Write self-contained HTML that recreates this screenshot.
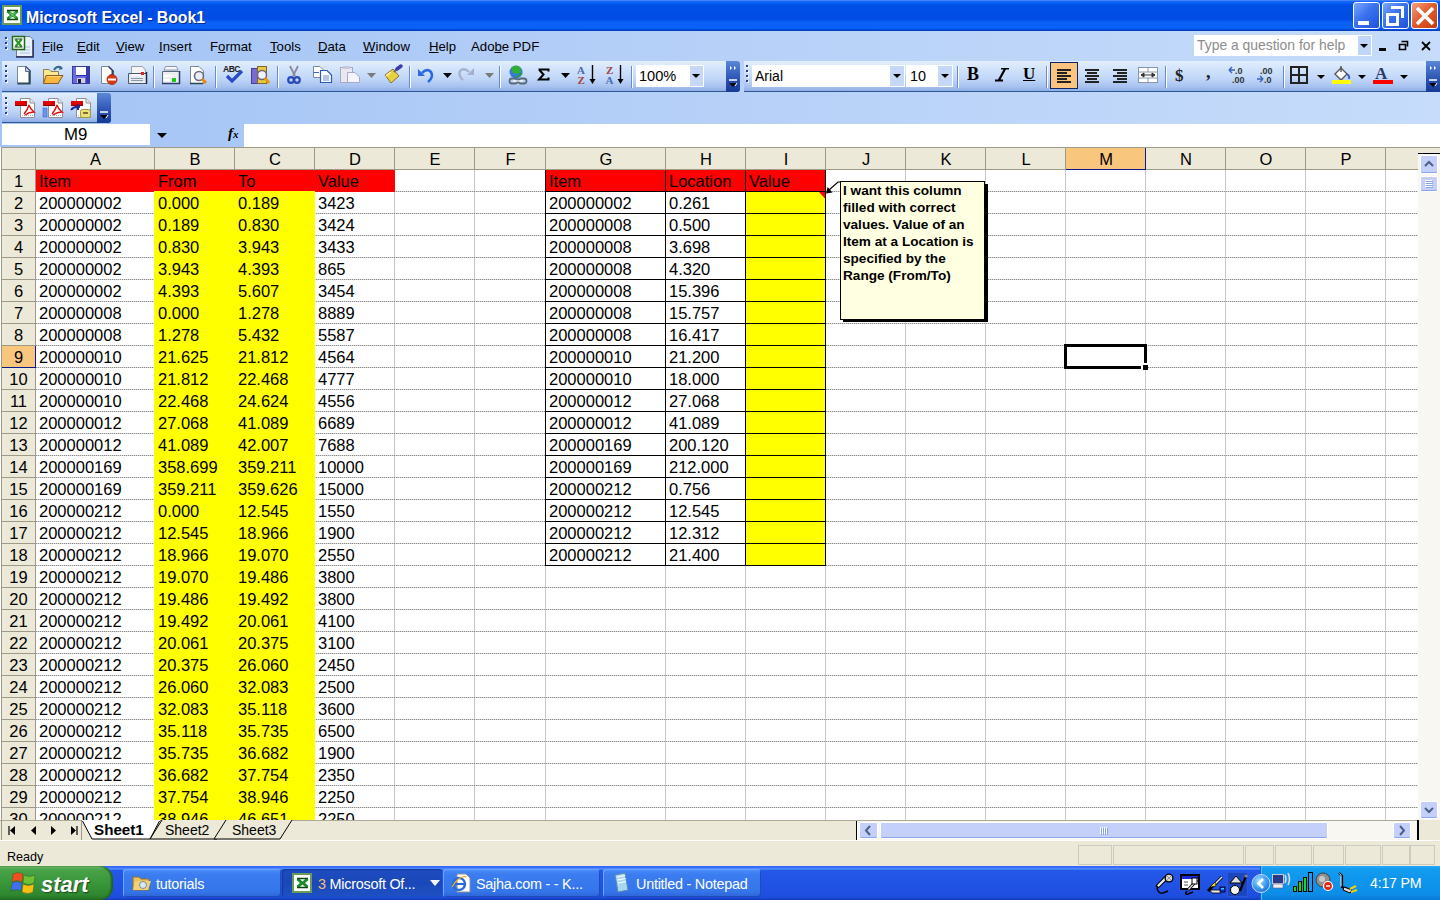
<!DOCTYPE html>
<html><head><meta charset="utf-8"><title>Microsoft Excel - Book1</title>
<style>
*{margin:0;padding:0;box-sizing:border-box}
html,body{width:1440px;height:900px;overflow:hidden;background:#fff;font-family:"Liberation Sans",sans-serif}
div,svg{position:absolute}
.tb{background:linear-gradient(#e2eefe 0%,#d0e2fb 30%,#c0d6f8 60%,#a8c2f0 85%,#8eaee6 100%);border-bottom:1px solid #2e5890;border-radius:0 4px 4px 0}
.menu{top:39px;font-size:13.2px;color:#000}
.sep{width:1px;height:22px;background:#6a8ccf;box-shadow:1px 0 0 #fff}
.dot{width:2px;height:2px;background:#27418f;box-shadow:1px 1px 0 #fff}
.cell{font-size:16.5px;color:#000;white-space:nowrap;line-height:18px}
.chev{background:linear-gradient(#5b87d8,#2a52b0 60%,#163a96)}
.dd{width:0;height:0;border-left:4px solid transparent;border-right:4px solid transparent;border-top:4px solid #000}
.sbtn{background:#c4d0fa;border:1px solid #fff;border-radius:2px;box-shadow:inset 0 -1px 0 #8aa8e8}
.task{top:869px;height:28px;border-radius:3px;background:linear-gradient(#4c8ef8,#3b7cf0 20%,#3575ea 80%,#2d64d6);box-shadow:inset 1px 1px 0 #6aa4ff,inset -1px -1px 0 #1e4cb8}
.task .lbl{top:6.5px;color:#fff;font-size:14.4px;letter-spacing:-0.25px;white-space:nowrap}
</style></head><body>

<div style="left:0;top:0;width:1440px;height:31px;background:linear-gradient(#6a9cff 0px,#1a6afa 1px,#0a60f6 3px,#0050e6 5px,#004ce4 19px,#0a5ef4 22px,#0a62f8 28px,#0046d6 30px,#003aa8 31px)"></div>
<svg style="left:2px;top:5px" width="21" height="21"><rect x="1" y="1" width="18" height="18" fill="#fff" stroke="#6a9a58" stroke-width="2"/><path d="M5.5 6L10 10L5.5 14M15.5 6L11 10L15.5 14" fill="none" stroke="#1a8a2a" stroke-width="3"/><path d="M5 5.5H16M5 14.5H16" stroke="#0a4a0a" stroke-width="1.6"/><path d="M7.5 7.5L13.5 12.5M13.5 7.5L7.5 12.5" stroke="#60c860" stroke-width="1.2"/></svg>
<div style="left:26px;top:9px;color:#fff;font-weight:bold;font-size:15.8px;white-space:nowrap;text-shadow:1px 1px 0 #0a2a8a">Microsoft Excel - Book1</div>
<div style="left:1353px;top:2px;width:27px;height:27px;border:1px solid #fff;border-radius:3px;background:linear-gradient(135deg,#7aa8fa,#3a72ee 45%,#2a5fe4 80%,#2050d0)"><div style="left:4px;top:18px;width:11px;height:4px;background:#fff"></div></div>
<div style="left:1382px;top:2px;width:27px;height:27px;border:1px solid #fff;border-radius:3px;background:linear-gradient(135deg,#7aa8fa,#3a72ee 45%,#2a5fe4 80%,#2050d0)"><div style="left:3px;top:10px;width:13px;height:13px;border:3px solid #fff;border-top-width:3px"></div><div style="left:8px;top:3px;width:13px;height:12px;border-top:3px solid #fff;border-right:3px solid #fff"></div></div>
<div style="left:1411px;top:2px;width:27px;height:27px;border:1px solid #fff;border-radius:3px;background:linear-gradient(135deg,#f4a080,#e2602e 45%,#d24818 80%,#b83a10)"><svg style="left:1px;top:1px" width="24" height="24"><path d="M4 4L20 20M20 4L4 20" stroke="#fff" stroke-width="3.6"/></svg></div>
<div style="left:0;top:31px;width:1440px;height:116px;background:linear-gradient(90deg,#a4c4f5,#b6d0f8 50%,#c6dcfa)"></div>
<div class="dot" style="left:5px;top:37px"></div>
<div class="dot" style="left:5px;top:42px"></div>
<div class="dot" style="left:5px;top:47px"></div>
<svg style="left:0;top:30px" width="40" height="30"><path d="M16.5 6.5H30L33.5 10V26.5H16.5Z" fill="#e8f0fa" stroke="#6a7aa0"/><path d="M33 10V27H16" fill="none" stroke="#2a2a5a" stroke-width="1.5"/><path d="M20 17H30M20 20H30M20 23H30" stroke="#a8c0e0"/><rect x="12.5" y="6.5" width="12" height="13" fill="#fff" stroke="#206a10" stroke-width="1.5"/><path d="M15.5 9.5L18.5 13L15.5 16.5M21.5 9.5L18.5 13L21.5 16.5" fill="none" stroke="#2a9a2a" stroke-width="2.2"/><path d="M14.5 9H22.5M14.5 17H22.5" stroke="#0a4a0a" stroke-width="1.2"/></svg>
<div class="menu" style="left:42px"><u>F</u>ile</div>
<div class="menu" style="left:77px"><u>E</u>dit</div>
<div class="menu" style="left:116px"><u>V</u>iew</div>
<div class="menu" style="left:159px"><u>I</u>nsert</div>
<div class="menu" style="left:210px">F<u>o</u>rmat</div>
<div class="menu" style="left:270px"><u>T</u>ools</div>
<div class="menu" style="left:318px"><u>D</u>ata</div>
<div class="menu" style="left:363px"><u>W</u>indow</div>
<div class="menu" style="left:429px"><u>H</u>elp</div>
<div class="menu" style="left:471px">Ado<u>b</u>e PDF</div>
<div style="left:1194px;top:35px;width:178px;height:21px;background:#fff"></div>
<div style="left:1358px;top:36px;width:13px;height:19px;background:#c0d6f8"></div>
<div class="dd" style="left:1360px;top:44px"></div>
<div style="left:1197px;top:37px;font-size:13.9px;color:#8c8c8c;white-space:nowrap">Type a question for help</div>
<div style="left:1379px;top:48px;width:7px;height:3px;background:#000"></div>
<svg style="left:1398px;top:40px" width="11" height="11"><path d="M3.5 1.5H9.5V6.5M1.5 4.5H7.5V9.5H1.5Z" fill="none" stroke="#000" stroke-width="1.6"/></svg>
<svg style="left:1421px;top:41px" width="10" height="10"><path d="M1 1L9 9M9 1L1 9" stroke="#000" stroke-width="1.8"/></svg>
<div class="tb" style="left:2px;top:61px;width:738px;height:31px"></div>
<div class="chev" style="left:726px;top:61px;width:14px;height:31px;border-radius:0 3px 3px 0"></div>
<div class="tb" style="left:744px;top:61px;width:696px;height:31px"></div>
<div class="chev" style="left:1426px;top:61px;width:14px;height:31px"></div>
<div class="tb" style="left:2px;top:93px;width:109px;height:30px"></div>
<div class="chev" style="left:97px;top:93px;width:14px;height:30px;border-radius:0 3px 3px 0"></div>
<svg style="left:727px;top:61px" width="12" height="30"><path d="M3 5L5 7L3 9ZM7 5L9 7L7 9Z" fill="#fff"/><path d="M2 19H10" stroke="#fff" stroke-width="1.5"/><path d="M2 22H10L6 26Z" fill="#000"/><path d="M8 25L10 22" stroke="#fff"/></svg>
<svg style="left:1427px;top:61px" width="12" height="30"><path d="M3 5L5 7L3 9ZM7 5L9 7L7 9Z" fill="#fff"/><path d="M2 19H10" stroke="#fff" stroke-width="1.5"/><path d="M2 22H10L6 26Z" fill="#000"/><path d="M8 25L10 22" stroke="#fff"/></svg>
<svg style="left:98px;top:93px" width="12" height="30"><path d="M2 19H10" stroke="#fff" stroke-width="1.5"/><path d="M2 22H10L6 26Z" fill="#000"/><path d="M8 25L10 22" stroke="#fff"/></svg>
<div class="dot" style="left:5px;top:65px"></div>
<div class="dot" style="left:5px;top:70px"></div>
<div class="dot" style="left:5px;top:75px"></div>
<div class="dot" style="left:5px;top:80px"></div>
<div class="dot" style="left:746px;top:65px"></div>
<div class="dot" style="left:746px;top:70px"></div>
<div class="dot" style="left:746px;top:75px"></div>
<div class="dot" style="left:746px;top:80px"></div>
<div class="dot" style="left:5px;top:97px"></div>
<div class="dot" style="left:5px;top:102px"></div>
<div class="dot" style="left:5px;top:107px"></div>
<div class="dot" style="left:5px;top:112px"></div>
<svg style="left:0;top:0" width="740" height="92"><path d="M17.5 66.5H26L30.5 71V83.5H17.5Z" fill="#fff" stroke="#7a8a98"/><path d="M29.5 71V83.5H17.5" fill="none" stroke="#2a4a5a" stroke-width="2"/><path d="M25.5 66.5L30.5 71.5" stroke="#3a3a6a" stroke-width="1.5"/><path d="M25.5 67V71.5H30" fill="#c8d0e0" stroke="#5a6a8a"/><path d="M43.5 69.5H49L51 71.5H58.5V83.5H43.5Z" fill="#f8e890" stroke="#8a8050"/><path d="M46 75.5H63L58 83.5H43.5Z" fill="#f4b840" stroke="#8a5a20"/><path d="M47 76.5H61" stroke="#fcd870"/><path d="M54 70Q57 65 62 68" fill="none" stroke="#3a6a8a" stroke-width="2"/><path d="M60 66L63 69L59 70Z" fill="#3a6a8a"/><rect x="72.5" y="66.5" width="17" height="17" fill="#6a6ae0" stroke="#3a3a9a"/><rect x="76" y="67" width="10" height="8" fill="#fff"/><rect x="76" y="75" width="10" height="1" fill="#2a2ab0"/><rect x="77" y="78" width="8" height="5" fill="#d0d0e0"/><rect x="78" y="79" width="3" height="4" fill="#1a1a3a"/><rect x="86" y="67" width="3" height="16" fill="#3a3ab8"/><path d="M101.5 66.5H109L113.5 71V83.5H101.5Z" fill="#fff" stroke="#7a8a98"/><path d="M112.5 71V76" stroke="#2a4a5a" stroke-width="2"/><path d="M108.5 66.5L113.5 71.5" stroke="#3a3a6a" stroke-width="1.5"/><circle cx="112" cy="79.5" r="5" fill="#d83810" stroke="#a02008" stroke-width="0.8"/><rect x="108" y="78.5" width="8" height="2" fill="#fff"/><path d="M131.5 66.5H142.5L145.5 70V73.5H131.5Z" fill="#f4f4f4" stroke="#9aa0a8"/><path d="M128.5 73.5H146.5V83.5H128.5Z" fill="#e8ecef" stroke="#4a5a6a"/><rect x="132" y="74" width="9" height="2" fill="#fff"/><rect x="131" y="78" width="12" height="1" fill="#8a98a8"/><rect x="131" y="80" width="12" height="1" fill="#8a98a8"/><rect x="141" y="72" width="3" height="3" fill="#e02020"/><path d="M146.5 72V84" stroke="#1a2a4a" stroke-width="1.5"/><path d="M165.5 66.5H176.5L178 70H164Z" fill="#f8f8f8" stroke="#8a98a8"/><path d="M162.5 71.5H179.5V83.5H162.5Z" fill="#eceff2" stroke="#5a6a7a" stroke-linejoin="round"/><rect x="164" y="75" width="8" height="2" fill="#fff"/><rect x="164" y="79" width="7" height="2" fill="#fff"/><rect x="172" y="78" width="4" height="4" fill="#10d010"/><path d="M179.5 71V84M162 83.5H180" stroke="#2a3a6a" stroke-width="1.5"/><path d="M190.5 66.5H199L203.5 71V83.5H190.5Z" fill="#fff" stroke="#7a8a98"/><path d="M190 83.5H203" stroke="#2a4a5a" stroke-width="1.6"/><circle cx="199" cy="76" r="4.5" fill="#e8eefa" stroke="#6a6a7a" stroke-width="1.6"/><path d="M202 79L206 83" stroke="#e88810" stroke-width="3"/><text x="223" y="72" font-family="Liberation Sans" font-weight="bold" font-size="8.5" fill="#202020" letter-spacing="-0.5">ABC</text><path d="M227 76L232 81L242 71" fill="none" stroke="#2a4ac8" stroke-width="3.2"/><rect x="251.5" y="68.5" width="6" height="15" fill="#7a6ad8" stroke="#4a3a9a"/><rect x="257.5" y="66.5" width="9" height="17" fill="#e8c848" stroke="#7a6a28"/><circle cx="262" cy="75" r="4.5" fill="#f0f0ff" stroke="#6a6a6a" stroke-width="1.5"/><path d="M265 78L269 83" stroke="#e89810" stroke-width="3"/><path d="M290 66L295 76M298 66L293 76" stroke="#8a8a9a" stroke-width="1.8"/><circle cx="291" cy="80" r="2.8" fill="none" stroke="#2a4ab8" stroke-width="2.2"/><circle cx="297" cy="80" r="2.8" fill="none" stroke="#2a4ab8" stroke-width="2.2"/><path d="M313.5 66.5H320L323.5 70V77.5H313.5Z" fill="#fff" stroke="#7a8a98"/><path d="M313.5 72.5H319" stroke="#3a6ab8"/><path d="M320.5 70.5H327L331.5 75V82.5H320.5Z" fill="#fff" stroke="#2a5ab8" stroke-width="1.2"/><path d="M323 76H329M323 78H329M323 80H329" stroke="#6a8ad0"/><rect x="340.5" y="67.5" width="12" height="15" fill="#e8e8f0" stroke="#a8a8c0"/><rect x="343" y="66" width="7" height="3" fill="#c8c8d8"/><path d="M347.5 72.5H355L359.5 77V82.5H347.5Z" fill="#f4f4fa" stroke="#a8a8c8"/><path d="M367 73H376L371.5 78Z" fill="#7a7a7a"/><path d="M385 75L393 69L399 76L391 83Z" fill="#e8d040" stroke="#8a7030"/><path d="M386 76L391 72" stroke="#fff8b0" stroke-width="1.5"/><path d="M394 72L398 68" stroke="#6a6a6a" stroke-width="2.2"/><path d="M397 69L401 66" stroke="#3a3ab0" stroke-width="3.5" stroke-linecap="round"/><path d="M422 73Q427 68 431 72Q434 77 428 82" fill="none" stroke="#2a6ae0" stroke-width="2.6"/><path d="M418 69V76H425Z" fill="#2a6ae0"/><path d="M443 73H452L447.5 78Z" fill="#000"/><path d="M469 72Q464 67 460 71Q458 76 463 80" fill="none" stroke="#a8b0d0" stroke-width="2.4"/><path d="M474 68V75H467Z" fill="#a8b0d0"/><path d="M485 73H494L489.5 78Z" fill="#7a7a7a"/><circle cx="516" cy="72" r="6.5" fill="#3a78d8"/><path d="M511 68Q515 64 520 67L521 72Q517 75 513 73Z" fill="#30b030"/><path d="M516 77Q520 76 522 73" fill="none" stroke="#20a040" stroke-width="2"/><rect x="509.5" y="78.5" width="8" height="5" rx="2.5" fill="none" stroke="#5a6a7a" stroke-width="1.8"/><rect x="518.5" y="78.5" width="8" height="5" rx="2.5" fill="none" stroke="#5a6a7a" stroke-width="1.8"/><path d="M513 81H523" stroke="#fff" stroke-width="1.2"/><path d="M538.5 69.5H548.5V71.5M539 69.5L543.5 74.5L539 79.5H548.5V77.5" fill="none" stroke="#000" stroke-width="2" stroke-linejoin="miter"/><path d="M561 73H570L565.5 78Z" fill="#000"/><text x="577" y="73.5" font-family="Liberation Serif" font-weight="bold" font-size="11" fill="#4a6ab0">A</text><text x="577.5" y="84" font-family="Liberation Serif" font-weight="bold" font-size="11" fill="#a84040">Z</text><path d="M592.5 65V81" stroke="#000" stroke-width="1.4"/><path d="M589.5 79L592.5 84L595.5 79Z" fill="#000"/><text x="606" y="73.5" font-family="Liberation Serif" font-weight="bold" font-size="11" fill="#a84040">Z</text><text x="605.5" y="84" font-family="Liberation Serif" font-weight="bold" font-size="11" fill="#4a6ab0">A</text><path d="M620.5 65V81" stroke="#000" stroke-width="1.4"/><path d="M617.5 79L620.5 84L623.5 79Z" fill="#000"/></svg>
<div class="sep" style="left:153px;top:66px"></div>
<div class="sep" style="left:215px;top:66px"></div>
<div class="sep" style="left:277px;top:66px"></div>
<div class="sep" style="left:409px;top:66px"></div>
<div class="sep" style="left:499px;top:66px"></div>
<div class="sep" style="left:631px;top:66px"></div>
<div style="left:636px;top:65px;width:68px;height:22px;background:#fff;border:1px solid #fff"></div>
<div style="left:690px;top:66px;width:13px;height:20px;background:#c6d8f8"></div>
<div class="dd" style="left:692px;top:74px;border-top-color:#000"></div>
<div style="left:639px;top:68px;font-size:14.6px;white-space:nowrap">100%</div>
<div style="left:752px;top:65px;width:153px;height:22px;background:#fff"></div>
<div style="left:890px;top:66px;width:14px;height:20px;background:#c6d8f8"></div>
<div class="dd" style="left:893px;top:74px;border-top-color:#000"></div>
<div style="left:755px;top:68px;font-size:14px">Arial</div>
<div style="left:906px;top:65px;width:47px;height:22px;background:#fff"></div>
<div style="left:938px;top:66px;width:14px;height:20px;background:#c6d8f8"></div>
<div class="dd" style="left:941px;top:74px;border-top-color:#000"></div>
<div style="left:910px;top:68px;font-size:14.4px">10</div>
<div class="sep" style="left:957px;top:66px"></div>
<div style="left:967px;top:64px;font-family:'Liberation Serif';font-weight:bold;font-size:18px">B</div>
<svg style="left:994px;top:68px" width="16" height="14"><path d="M7 0.5H15M1 12.5H9M11 1L5 12" stroke="#000" stroke-width="2.2" fill="none"/></svg>
<div style="left:1023px;top:64px;font-family:'Liberation Serif';font-weight:bold;font-size:17px;text-decoration:underline">U</div>
<div class="sep" style="left:1046px;top:66px"></div>
<div style="left:1050px;top:62px;width:28px;height:27px;background:#fbc47e;border:1px solid #0a246a"></div>
<svg style="left:1057px;top:66px" width="16" height="20"><rect x="0" y="3" width="14" height="2" fill="#222"/><rect x="0" y="6" width="10" height="2" fill="#222"/><rect x="0" y="9" width="14" height="2" fill="#222"/><rect x="0" y="12" width="10" height="2" fill="#222"/><rect x="0" y="15" width="14" height="2" fill="#222"/></svg>
<svg style="left:1085px;top:66px" width="16" height="20"><rect x="0.0" y="3" width="14" height="2" fill="#222"/><rect x="2.0" y="6" width="10" height="2" fill="#222"/><rect x="0.0" y="9" width="14" height="2" fill="#222"/><rect x="2.0" y="12" width="10" height="2" fill="#222"/><rect x="0.0" y="15" width="14" height="2" fill="#222"/></svg>
<svg style="left:1113px;top:66px" width="16" height="20"><rect x="0" y="3" width="14" height="2" fill="#222"/><rect x="4" y="6" width="10" height="2" fill="#222"/><rect x="0" y="9" width="14" height="2" fill="#222"/><rect x="4" y="12" width="10" height="2" fill="#222"/><rect x="0" y="15" width="14" height="2" fill="#222"/></svg>
<svg style="left:1138px;top:65px" width="20" height="20"><rect x="0.5" y="2.5" width="19" height="15" fill="#fff" stroke="#8898a8"/><path d="M0 7H20M0 13H20M10 2V7M10 13V18" stroke="#8898a8"/><path d="M3 10H17M3 10L6 8V12ZM17 10L14 8V12Z" fill="#333" stroke="#333"/></svg>
<div class="sep" style="left:1165px;top:66px"></div>
<div style="left:1175px;top:66px;font-family:'Liberation Serif';font-weight:bold;font-size:17px;color:#222">$</div>
<div style="left:1206px;top:62px;font-family:'Liberation Serif';font-weight:bold;font-size:18px;color:#222">,</div>
<svg style="left:1228px;top:65px" width="20" height="20"><text x="7" y="9" font-family="Liberation Sans" font-weight="bold" font-size="9" fill="#333">.0</text><text x="4" y="18" font-family="Liberation Sans" font-weight="bold" font-size="9" fill="#333">.00</text><path d="M1 5H7M1 5L4 2M1 5L4 8" stroke="#3a62c0" stroke-width="1.4" fill="none"/></svg>
<svg style="left:1256px;top:65px" width="20" height="20"><text x="4" y="9" font-family="Liberation Sans" font-weight="bold" font-size="9" fill="#333">.00</text><text x="8" y="18" font-family="Liberation Sans" font-weight="bold" font-size="9" fill="#333">.0</text><path d="M1 14H7M7 14L4 11M7 14L4 17" stroke="#3a62c0" stroke-width="1.4" fill="none"/></svg>
<div class="sep" style="left:1283px;top:66px"></div>
<svg style="left:1290px;top:66px" width="18" height="18"><rect x="1" y="1" width="16" height="16" fill="none" stroke="#222" stroke-width="2"/><path d="M9 1V17M1 9H17" stroke="#222" stroke-width="2"/></svg>
<div class="dd" style="left:1317px;top:75px;border-top-color:#000"></div>
<svg style="left:1331px;top:65px" width="21" height="20"><path d="M4 9L10 3L16 9L10 15Z" fill="#fff" stroke="#555" stroke-width="1.4"/><path d="M10 1V7" stroke="#555" stroke-width="1.4"/><path d="M16 9Q19 11 18 14" stroke="#3a62c0" stroke-width="2" fill="none"/><rect x="1" y="15" width="19" height="4" fill="#ffff00"/></svg>
<div class="dd" style="left:1358px;top:75px;border-top-color:#000"></div>
<svg style="left:1372px;top:65px" width="22" height="20"><text x="3" y="14" font-family="Liberation Serif" font-weight="bold" font-size="17" fill="#2a3a70">A</text><rect x="1" y="15" width="20" height="4" fill="#ff0000"/></svg>
<div class="dd" style="left:1400px;top:75px;border-top-color:#000"></div>
<svg style="left:0;top:0" width="100" height="124"><path d="M20.5 98.5H30L34.5 103V117.5H20.5Z" fill="#fff" stroke="#909090"/><path d="M30 98.5V103H34.5" fill="#e8e8e8" stroke="#909090"/><path d="M22 115.5H34" stroke="#b0b0b0" stroke-dasharray="1 1"/><rect x="15" y="101" width="12" height="5" fill="#e00000"/><rect x="15" y="105" width="12" height="1" fill="#900000"/><path d="M24 114Q28 109 29 105Q30 109 34 112Q29 112 25 115" fill="none" stroke="#e01010" stroke-width="1.4"/><path d="M48.5 98.5H58L62.5 103V117.5H48.5Z" fill="#fff" stroke="#909090"/><path d="M58 98.5V103H62.5" fill="#e8e8e8" stroke="#909090"/><path d="M50 115.5H62" stroke="#b0b0b0" stroke-dasharray="1 1"/><rect x="43" y="101" width="12" height="5" fill="#e00000"/><rect x="43" y="105" width="12" height="1" fill="#900000"/><path d="M52 114Q56 109 57 105Q58 109 62 112Q57 112 53 115" fill="none" stroke="#e01010" stroke-width="1.4"/><rect x="43" y="108" width="4" height="9" fill="#6a98e8" stroke="#3a68c8" stroke-width="0.6"/><path d="M76.5 98.5H86L90.5 103V117.5H76.5Z" fill="#fff" stroke="#909090"/><path d="M86 98.5V103H90.5" fill="#e8e8e8" stroke="#909090"/><path d="M78 115.5H90" stroke="#b0b0b0" stroke-dasharray="1 1"/><rect x="71" y="101" width="12" height="5" fill="#e00000"/><rect x="71" y="105" width="12" height="1" fill="#900000"/><path d="M71 110Q74 106 80 107" fill="none" stroke="#1a2a98" stroke-width="2"/><path d="M78 104V110" stroke="#1a2a98" stroke-width="2"/><rect x="80.5" y="109.5" width="10" height="8" rx="2" fill="#e8e078" stroke="#a09838"/><rect x="83" y="112" width="5" height="2" fill="#8a6a30"/></svg>
<div style="left:2px;top:124px;width:148px;height:21px;background:#fff"></div>
<div style="left:64px;top:125px;font-size:16.8px">M9</div>
<div class="dd" style="left:157px;top:133px;border-left-width:5px;border-right-width:5px;border-top-width:5px"></div>
<div style="left:228px;top:125px;font-family:'Liberation Serif';font-style:italic;font-weight:bold;font-size:15px">f<span style="font-size:11px">x</span></div>
<div style="left:244px;top:124px;width:1196px;height:23px;background:#fff"></div>
<div style="left:0;top:147px;width:1418px;height:673px;background:#fff"></div>
<div style="left:1px;top:147px;width:1417px;height:23px;background:#ece9d8"></div>
<div style="left:1px;top:147px;width:35px;height:673px;background:#ece9d8"></div>
<div style="left:154px;top:170px;width:1px;height:650px;background:#c8c8c8"></div>
<div style="left:234px;top:170px;width:1px;height:650px;background:#c8c8c8"></div>
<div style="left:314px;top:170px;width:1px;height:650px;background:#c8c8c8"></div>
<div style="left:394px;top:170px;width:1px;height:650px;background:#c8c8c8"></div>
<div style="left:474px;top:170px;width:1px;height:650px;background:#c8c8c8"></div>
<div style="left:545px;top:170px;width:1px;height:650px;background:#c8c8c8"></div>
<div style="left:665px;top:170px;width:1px;height:650px;background:#c8c8c8"></div>
<div style="left:745px;top:170px;width:1px;height:650px;background:#c8c8c8"></div>
<div style="left:825px;top:170px;width:1px;height:650px;background:#c8c8c8"></div>
<div style="left:905px;top:170px;width:1px;height:650px;background:#c8c8c8"></div>
<div style="left:985px;top:170px;width:1px;height:650px;background:#c8c8c8"></div>
<div style="left:1065px;top:170px;width:1px;height:650px;background:#c8c8c8"></div>
<div style="left:1145px;top:170px;width:1px;height:650px;background:#c8c8c8"></div>
<div style="left:1225px;top:170px;width:1px;height:650px;background:#c8c8c8"></div>
<div style="left:1305px;top:170px;width:1px;height:650px;background:#c8c8c8"></div>
<div style="left:1385px;top:170px;width:1px;height:650px;background:#c8c8c8"></div>
<div style="left:36px;top:191px;width:1382px;height:1px;background:repeating-linear-gradient(90deg,#8e8e8e 0 1px,#d6d6d6 1px 2px)"></div>
<div style="left:36px;top:213px;width:1382px;height:1px;background:repeating-linear-gradient(90deg,#8e8e8e 0 1px,#d6d6d6 1px 2px)"></div>
<div style="left:36px;top:235px;width:1382px;height:1px;background:repeating-linear-gradient(90deg,#8e8e8e 0 1px,#d6d6d6 1px 2px)"></div>
<div style="left:36px;top:257px;width:1382px;height:1px;background:repeating-linear-gradient(90deg,#8e8e8e 0 1px,#d6d6d6 1px 2px)"></div>
<div style="left:36px;top:279px;width:1382px;height:1px;background:repeating-linear-gradient(90deg,#8e8e8e 0 1px,#d6d6d6 1px 2px)"></div>
<div style="left:36px;top:301px;width:1382px;height:1px;background:repeating-linear-gradient(90deg,#8e8e8e 0 1px,#d6d6d6 1px 2px)"></div>
<div style="left:36px;top:323px;width:1382px;height:1px;background:repeating-linear-gradient(90deg,#8e8e8e 0 1px,#d6d6d6 1px 2px)"></div>
<div style="left:36px;top:345px;width:1382px;height:1px;background:repeating-linear-gradient(90deg,#8e8e8e 0 1px,#d6d6d6 1px 2px)"></div>
<div style="left:36px;top:367px;width:1382px;height:1px;background:repeating-linear-gradient(90deg,#8e8e8e 0 1px,#d6d6d6 1px 2px)"></div>
<div style="left:36px;top:389px;width:1382px;height:1px;background:repeating-linear-gradient(90deg,#8e8e8e 0 1px,#d6d6d6 1px 2px)"></div>
<div style="left:36px;top:411px;width:1382px;height:1px;background:repeating-linear-gradient(90deg,#8e8e8e 0 1px,#d6d6d6 1px 2px)"></div>
<div style="left:36px;top:433px;width:1382px;height:1px;background:repeating-linear-gradient(90deg,#8e8e8e 0 1px,#d6d6d6 1px 2px)"></div>
<div style="left:36px;top:455px;width:1382px;height:1px;background:repeating-linear-gradient(90deg,#8e8e8e 0 1px,#d6d6d6 1px 2px)"></div>
<div style="left:36px;top:477px;width:1382px;height:1px;background:repeating-linear-gradient(90deg,#8e8e8e 0 1px,#d6d6d6 1px 2px)"></div>
<div style="left:36px;top:499px;width:1382px;height:1px;background:repeating-linear-gradient(90deg,#8e8e8e 0 1px,#d6d6d6 1px 2px)"></div>
<div style="left:36px;top:521px;width:1382px;height:1px;background:repeating-linear-gradient(90deg,#8e8e8e 0 1px,#d6d6d6 1px 2px)"></div>
<div style="left:36px;top:543px;width:1382px;height:1px;background:repeating-linear-gradient(90deg,#8e8e8e 0 1px,#d6d6d6 1px 2px)"></div>
<div style="left:36px;top:565px;width:1382px;height:1px;background:repeating-linear-gradient(90deg,#8e8e8e 0 1px,#d6d6d6 1px 2px)"></div>
<div style="left:36px;top:587px;width:1382px;height:1px;background:repeating-linear-gradient(90deg,#8e8e8e 0 1px,#d6d6d6 1px 2px)"></div>
<div style="left:36px;top:609px;width:1382px;height:1px;background:repeating-linear-gradient(90deg,#8e8e8e 0 1px,#d6d6d6 1px 2px)"></div>
<div style="left:36px;top:631px;width:1382px;height:1px;background:repeating-linear-gradient(90deg,#8e8e8e 0 1px,#d6d6d6 1px 2px)"></div>
<div style="left:36px;top:653px;width:1382px;height:1px;background:repeating-linear-gradient(90deg,#8e8e8e 0 1px,#d6d6d6 1px 2px)"></div>
<div style="left:36px;top:675px;width:1382px;height:1px;background:repeating-linear-gradient(90deg,#8e8e8e 0 1px,#d6d6d6 1px 2px)"></div>
<div style="left:36px;top:697px;width:1382px;height:1px;background:repeating-linear-gradient(90deg,#8e8e8e 0 1px,#d6d6d6 1px 2px)"></div>
<div style="left:36px;top:719px;width:1382px;height:1px;background:repeating-linear-gradient(90deg,#8e8e8e 0 1px,#d6d6d6 1px 2px)"></div>
<div style="left:36px;top:741px;width:1382px;height:1px;background:repeating-linear-gradient(90deg,#8e8e8e 0 1px,#d6d6d6 1px 2px)"></div>
<div style="left:36px;top:763px;width:1382px;height:1px;background:repeating-linear-gradient(90deg,#8e8e8e 0 1px,#d6d6d6 1px 2px)"></div>
<div style="left:36px;top:785px;width:1382px;height:1px;background:repeating-linear-gradient(90deg,#8e8e8e 0 1px,#d6d6d6 1px 2px)"></div>
<div style="left:36px;top:807px;width:1382px;height:1px;background:repeating-linear-gradient(90deg,#8e8e8e 0 1px,#d6d6d6 1px 2px)"></div>
<div style="left:35px;top:169px;width:360px;height:23px;background:#ff0000"></div>
<div style="left:154px;top:191px;width:161px;height:629px;background:#ffff00"></div>
<div style="left:545px;top:169px;width:281px;height:23px;background:#ff0000"></div>
<div style="left:745px;top:191px;width:81px;height:375px;background:#ffff00"></div>
<div style="left:1px;top:147px;width:1417px;height:1px;background:#9d9a88"></div>
<div style="left:1px;top:169px;width:1417px;height:1px;background:#9d9a88"></div>
<div style="left:1px;top:147px;width:1px;height:673px;background:#9d9a88"></div>
<div style="left:35px;top:147px;width:1px;height:673px;background:#9d9a88"></div>
<div style="left:154px;top:147px;width:1px;height:23px;background:#9d9a88"></div>
<div style="left:234px;top:147px;width:1px;height:23px;background:#9d9a88"></div>
<div style="left:314px;top:147px;width:1px;height:23px;background:#9d9a88"></div>
<div style="left:394px;top:147px;width:1px;height:23px;background:#9d9a88"></div>
<div style="left:474px;top:147px;width:1px;height:23px;background:#9d9a88"></div>
<div style="left:545px;top:147px;width:1px;height:23px;background:#9d9a88"></div>
<div style="left:665px;top:147px;width:1px;height:23px;background:#9d9a88"></div>
<div style="left:745px;top:147px;width:1px;height:23px;background:#9d9a88"></div>
<div style="left:825px;top:147px;width:1px;height:23px;background:#9d9a88"></div>
<div style="left:905px;top:147px;width:1px;height:23px;background:#9d9a88"></div>
<div style="left:985px;top:147px;width:1px;height:23px;background:#9d9a88"></div>
<div style="left:1065px;top:147px;width:1px;height:23px;background:#9d9a88"></div>
<div style="left:1145px;top:147px;width:1px;height:23px;background:#9d9a88"></div>
<div style="left:1225px;top:147px;width:1px;height:23px;background:#9d9a88"></div>
<div style="left:1305px;top:147px;width:1px;height:23px;background:#9d9a88"></div>
<div style="left:1385px;top:147px;width:1px;height:23px;background:#9d9a88"></div>
<div style="left:1px;top:191px;width:35px;height:1px;background:#9d9a88"></div>
<div style="left:1px;top:213px;width:35px;height:1px;background:#9d9a88"></div>
<div style="left:1px;top:235px;width:35px;height:1px;background:#9d9a88"></div>
<div style="left:1px;top:257px;width:35px;height:1px;background:#9d9a88"></div>
<div style="left:1px;top:279px;width:35px;height:1px;background:#9d9a88"></div>
<div style="left:1px;top:301px;width:35px;height:1px;background:#9d9a88"></div>
<div style="left:1px;top:323px;width:35px;height:1px;background:#9d9a88"></div>
<div style="left:1px;top:345px;width:35px;height:1px;background:#9d9a88"></div>
<div style="left:1px;top:367px;width:35px;height:1px;background:#9d9a88"></div>
<div style="left:1px;top:389px;width:35px;height:1px;background:#9d9a88"></div>
<div style="left:1px;top:411px;width:35px;height:1px;background:#9d9a88"></div>
<div style="left:1px;top:433px;width:35px;height:1px;background:#9d9a88"></div>
<div style="left:1px;top:455px;width:35px;height:1px;background:#9d9a88"></div>
<div style="left:1px;top:477px;width:35px;height:1px;background:#9d9a88"></div>
<div style="left:1px;top:499px;width:35px;height:1px;background:#9d9a88"></div>
<div style="left:1px;top:521px;width:35px;height:1px;background:#9d9a88"></div>
<div style="left:1px;top:543px;width:35px;height:1px;background:#9d9a88"></div>
<div style="left:1px;top:565px;width:35px;height:1px;background:#9d9a88"></div>
<div style="left:1px;top:587px;width:35px;height:1px;background:#9d9a88"></div>
<div style="left:1px;top:609px;width:35px;height:1px;background:#9d9a88"></div>
<div style="left:1px;top:631px;width:35px;height:1px;background:#9d9a88"></div>
<div style="left:1px;top:653px;width:35px;height:1px;background:#9d9a88"></div>
<div style="left:1px;top:675px;width:35px;height:1px;background:#9d9a88"></div>
<div style="left:1px;top:697px;width:35px;height:1px;background:#9d9a88"></div>
<div style="left:1px;top:719px;width:35px;height:1px;background:#9d9a88"></div>
<div style="left:1px;top:741px;width:35px;height:1px;background:#9d9a88"></div>
<div style="left:1px;top:763px;width:35px;height:1px;background:#9d9a88"></div>
<div style="left:1px;top:785px;width:35px;height:1px;background:#9d9a88"></div>
<div style="left:1px;top:807px;width:35px;height:1px;background:#9d9a88"></div>
<div style="left:1066px;top:148px;width:79px;height:21px;background:#f9c67e"></div>
<div style="left:1066px;top:169px;width:80px;height:1px;background:#0a1a8a"></div>
<div style="left:1145px;top:148px;width:1px;height:22px;background:#0a1a8a"></div>
<div style="left:2px;top:346px;width:33px;height:21px;background:#f9c67e"></div>
<div style="left:35px;top:346px;width:1px;height:22px;background:#0a1a8a"></div>
<div style="left:2px;top:367px;width:34px;height:1px;background:#0a1a8a"></div>
<div class="cell" style="left:36px;top:150px;width:119px;text-align:center;font-size:16.5px">A</div>
<div class="cell" style="left:155px;top:150px;width:80px;text-align:center;font-size:16.5px">B</div>
<div class="cell" style="left:235px;top:150px;width:80px;text-align:center;font-size:16.5px">C</div>
<div class="cell" style="left:315px;top:150px;width:80px;text-align:center;font-size:16.5px">D</div>
<div class="cell" style="left:395px;top:150px;width:80px;text-align:center;font-size:16.5px">E</div>
<div class="cell" style="left:475px;top:150px;width:71px;text-align:center;font-size:16.5px">F</div>
<div class="cell" style="left:546px;top:150px;width:120px;text-align:center;font-size:16.5px">G</div>
<div class="cell" style="left:666px;top:150px;width:80px;text-align:center;font-size:16.5px">H</div>
<div class="cell" style="left:746px;top:150px;width:80px;text-align:center;font-size:16.5px">I</div>
<div class="cell" style="left:826px;top:150px;width:80px;text-align:center;font-size:16.5px">J</div>
<div class="cell" style="left:906px;top:150px;width:80px;text-align:center;font-size:16.5px">K</div>
<div class="cell" style="left:986px;top:150px;width:80px;text-align:center;font-size:16.5px">L</div>
<div class="cell" style="left:1066px;top:150px;width:80px;text-align:center;font-size:16.5px">M</div>
<div class="cell" style="left:1146px;top:150px;width:80px;text-align:center;font-size:16.5px">N</div>
<div class="cell" style="left:1226px;top:150px;width:80px;text-align:center;font-size:16.5px">O</div>
<div class="cell" style="left:1306px;top:150px;width:80px;text-align:center;font-size:16.5px">P</div>
<div class="cell" style="left:1386px;top:150px;width:80px;text-align:center;font-size:16.5px">Q</div>
<div style="left:0;top:820px;width:1440px;height:80px;background:#fff"></div>
<div class="cell" style="left:1px;top:172px;width:35px;text-align:center">1</div>
<div class="cell" style="left:1px;top:194px;width:35px;text-align:center">2</div>
<div class="cell" style="left:1px;top:216px;width:35px;text-align:center">3</div>
<div class="cell" style="left:1px;top:238px;width:35px;text-align:center">4</div>
<div class="cell" style="left:1px;top:260px;width:35px;text-align:center">5</div>
<div class="cell" style="left:1px;top:282px;width:35px;text-align:center">6</div>
<div class="cell" style="left:1px;top:304px;width:35px;text-align:center">7</div>
<div class="cell" style="left:1px;top:326px;width:35px;text-align:center">8</div>
<div class="cell" style="left:1px;top:348px;width:35px;text-align:center">9</div>
<div class="cell" style="left:1px;top:370px;width:35px;text-align:center">10</div>
<div class="cell" style="left:1px;top:392px;width:35px;text-align:center">11</div>
<div class="cell" style="left:1px;top:414px;width:35px;text-align:center">12</div>
<div class="cell" style="left:1px;top:436px;width:35px;text-align:center">13</div>
<div class="cell" style="left:1px;top:458px;width:35px;text-align:center">14</div>
<div class="cell" style="left:1px;top:480px;width:35px;text-align:center">15</div>
<div class="cell" style="left:1px;top:502px;width:35px;text-align:center">16</div>
<div class="cell" style="left:1px;top:524px;width:35px;text-align:center">17</div>
<div class="cell" style="left:1px;top:546px;width:35px;text-align:center">18</div>
<div class="cell" style="left:1px;top:568px;width:35px;text-align:center">19</div>
<div class="cell" style="left:1px;top:590px;width:35px;text-align:center">20</div>
<div class="cell" style="left:1px;top:612px;width:35px;text-align:center">21</div>
<div class="cell" style="left:1px;top:634px;width:35px;text-align:center">22</div>
<div class="cell" style="left:1px;top:656px;width:35px;text-align:center">23</div>
<div class="cell" style="left:1px;top:678px;width:35px;text-align:center">24</div>
<div class="cell" style="left:1px;top:700px;width:35px;text-align:center">25</div>
<div class="cell" style="left:1px;top:722px;width:35px;text-align:center">26</div>
<div class="cell" style="left:1px;top:744px;width:35px;text-align:center">27</div>
<div class="cell" style="left:1px;top:766px;width:35px;text-align:center">28</div>
<div class="cell" style="left:1px;top:788px;width:35px;text-align:center">29</div>
<div class="cell" style="left:1px;top:810px;width:35px;text-align:center">30</div>
<div style="left:545px;top:191px;width:281px;height:1px;background:#000"></div>
<div style="left:545px;top:213px;width:281px;height:1px;background:#000"></div>
<div style="left:545px;top:235px;width:281px;height:1px;background:#000"></div>
<div style="left:545px;top:257px;width:281px;height:1px;background:#000"></div>
<div style="left:545px;top:279px;width:281px;height:1px;background:#000"></div>
<div style="left:545px;top:301px;width:281px;height:1px;background:#000"></div>
<div style="left:545px;top:323px;width:281px;height:1px;background:#000"></div>
<div style="left:545px;top:345px;width:281px;height:1px;background:#000"></div>
<div style="left:545px;top:367px;width:281px;height:1px;background:#000"></div>
<div style="left:545px;top:389px;width:281px;height:1px;background:#000"></div>
<div style="left:545px;top:411px;width:281px;height:1px;background:#000"></div>
<div style="left:545px;top:433px;width:281px;height:1px;background:#000"></div>
<div style="left:545px;top:455px;width:281px;height:1px;background:#000"></div>
<div style="left:545px;top:477px;width:281px;height:1px;background:#000"></div>
<div style="left:545px;top:499px;width:281px;height:1px;background:#000"></div>
<div style="left:545px;top:521px;width:281px;height:1px;background:#000"></div>
<div style="left:545px;top:543px;width:281px;height:1px;background:#000"></div>
<div style="left:545px;top:565px;width:281px;height:1px;background:#000"></div>
<div style="left:545px;top:170px;width:1px;height:396px;background:#000"></div>
<div style="left:665px;top:170px;width:1px;height:396px;background:#000"></div>
<div style="left:745px;top:170px;width:1px;height:396px;background:#000"></div>
<div style="left:825px;top:170px;width:1px;height:396px;background:#000"></div>
<div class="cell" style="left:39px;top:172px">Item</div>
<div class="cell" style="left:158px;top:172px">From</div>
<div class="cell" style="left:238px;top:172px">To</div>
<div class="cell" style="left:318px;top:172px">Value</div>
<div class="cell" style="left:39px;top:194px">200000002</div>
<div class="cell" style="left:158px;top:194px">0.000</div>
<div class="cell" style="left:238px;top:194px">0.189</div>
<div class="cell" style="left:318px;top:194px">3423</div>
<div class="cell" style="left:39px;top:216px">200000002</div>
<div class="cell" style="left:158px;top:216px">0.189</div>
<div class="cell" style="left:238px;top:216px">0.830</div>
<div class="cell" style="left:318px;top:216px">3424</div>
<div class="cell" style="left:39px;top:238px">200000002</div>
<div class="cell" style="left:158px;top:238px">0.830</div>
<div class="cell" style="left:238px;top:238px">3.943</div>
<div class="cell" style="left:318px;top:238px">3433</div>
<div class="cell" style="left:39px;top:260px">200000002</div>
<div class="cell" style="left:158px;top:260px">3.943</div>
<div class="cell" style="left:238px;top:260px">4.393</div>
<div class="cell" style="left:318px;top:260px">865</div>
<div class="cell" style="left:39px;top:282px">200000002</div>
<div class="cell" style="left:158px;top:282px">4.393</div>
<div class="cell" style="left:238px;top:282px">5.607</div>
<div class="cell" style="left:318px;top:282px">3454</div>
<div class="cell" style="left:39px;top:304px">200000008</div>
<div class="cell" style="left:158px;top:304px">0.000</div>
<div class="cell" style="left:238px;top:304px">1.278</div>
<div class="cell" style="left:318px;top:304px">8889</div>
<div class="cell" style="left:39px;top:326px">200000008</div>
<div class="cell" style="left:158px;top:326px">1.278</div>
<div class="cell" style="left:238px;top:326px">5.432</div>
<div class="cell" style="left:318px;top:326px">5587</div>
<div class="cell" style="left:39px;top:348px">200000010</div>
<div class="cell" style="left:158px;top:348px">21.625</div>
<div class="cell" style="left:238px;top:348px">21.812</div>
<div class="cell" style="left:318px;top:348px">4564</div>
<div class="cell" style="left:39px;top:370px">200000010</div>
<div class="cell" style="left:158px;top:370px">21.812</div>
<div class="cell" style="left:238px;top:370px">22.468</div>
<div class="cell" style="left:318px;top:370px">4777</div>
<div class="cell" style="left:39px;top:392px">200000010</div>
<div class="cell" style="left:158px;top:392px">22.468</div>
<div class="cell" style="left:238px;top:392px">24.624</div>
<div class="cell" style="left:318px;top:392px">4556</div>
<div class="cell" style="left:39px;top:414px">200000012</div>
<div class="cell" style="left:158px;top:414px">27.068</div>
<div class="cell" style="left:238px;top:414px">41.089</div>
<div class="cell" style="left:318px;top:414px">6689</div>
<div class="cell" style="left:39px;top:436px">200000012</div>
<div class="cell" style="left:158px;top:436px">41.089</div>
<div class="cell" style="left:238px;top:436px">42.007</div>
<div class="cell" style="left:318px;top:436px">7688</div>
<div class="cell" style="left:39px;top:458px">200000169</div>
<div class="cell" style="left:158px;top:458px">358.699</div>
<div class="cell" style="left:238px;top:458px">359.211</div>
<div class="cell" style="left:318px;top:458px">10000</div>
<div class="cell" style="left:39px;top:480px">200000169</div>
<div class="cell" style="left:158px;top:480px">359.211</div>
<div class="cell" style="left:238px;top:480px">359.626</div>
<div class="cell" style="left:318px;top:480px">15000</div>
<div class="cell" style="left:39px;top:502px">200000212</div>
<div class="cell" style="left:158px;top:502px">0.000</div>
<div class="cell" style="left:238px;top:502px">12.545</div>
<div class="cell" style="left:318px;top:502px">1550</div>
<div class="cell" style="left:39px;top:524px">200000212</div>
<div class="cell" style="left:158px;top:524px">12.545</div>
<div class="cell" style="left:238px;top:524px">18.966</div>
<div class="cell" style="left:318px;top:524px">1900</div>
<div class="cell" style="left:39px;top:546px">200000212</div>
<div class="cell" style="left:158px;top:546px">18.966</div>
<div class="cell" style="left:238px;top:546px">19.070</div>
<div class="cell" style="left:318px;top:546px">2550</div>
<div class="cell" style="left:39px;top:568px">200000212</div>
<div class="cell" style="left:158px;top:568px">19.070</div>
<div class="cell" style="left:238px;top:568px">19.486</div>
<div class="cell" style="left:318px;top:568px">3800</div>
<div class="cell" style="left:39px;top:590px">200000212</div>
<div class="cell" style="left:158px;top:590px">19.486</div>
<div class="cell" style="left:238px;top:590px">19.492</div>
<div class="cell" style="left:318px;top:590px">3800</div>
<div class="cell" style="left:39px;top:612px">200000212</div>
<div class="cell" style="left:158px;top:612px">19.492</div>
<div class="cell" style="left:238px;top:612px">20.061</div>
<div class="cell" style="left:318px;top:612px">4100</div>
<div class="cell" style="left:39px;top:634px">200000212</div>
<div class="cell" style="left:158px;top:634px">20.061</div>
<div class="cell" style="left:238px;top:634px">20.375</div>
<div class="cell" style="left:318px;top:634px">3100</div>
<div class="cell" style="left:39px;top:656px">200000212</div>
<div class="cell" style="left:158px;top:656px">20.375</div>
<div class="cell" style="left:238px;top:656px">26.060</div>
<div class="cell" style="left:318px;top:656px">2450</div>
<div class="cell" style="left:39px;top:678px">200000212</div>
<div class="cell" style="left:158px;top:678px">26.060</div>
<div class="cell" style="left:238px;top:678px">32.083</div>
<div class="cell" style="left:318px;top:678px">2500</div>
<div class="cell" style="left:39px;top:700px">200000212</div>
<div class="cell" style="left:158px;top:700px">32.083</div>
<div class="cell" style="left:238px;top:700px">35.118</div>
<div class="cell" style="left:318px;top:700px">3600</div>
<div class="cell" style="left:39px;top:722px">200000212</div>
<div class="cell" style="left:158px;top:722px">35.118</div>
<div class="cell" style="left:238px;top:722px">35.735</div>
<div class="cell" style="left:318px;top:722px">6500</div>
<div class="cell" style="left:39px;top:744px">200000212</div>
<div class="cell" style="left:158px;top:744px">35.735</div>
<div class="cell" style="left:238px;top:744px">36.682</div>
<div class="cell" style="left:318px;top:744px">1900</div>
<div class="cell" style="left:39px;top:766px">200000212</div>
<div class="cell" style="left:158px;top:766px">36.682</div>
<div class="cell" style="left:238px;top:766px">37.754</div>
<div class="cell" style="left:318px;top:766px">2350</div>
<div class="cell" style="left:39px;top:788px">200000212</div>
<div class="cell" style="left:158px;top:788px">37.754</div>
<div class="cell" style="left:238px;top:788px">38.946</div>
<div class="cell" style="left:318px;top:788px">2250</div>
<div class="cell" style="left:39px;top:810px">200000212</div>
<div class="cell" style="left:158px;top:810px">38.946</div>
<div class="cell" style="left:238px;top:810px">46.651</div>
<div class="cell" style="left:318px;top:810px">2250</div>
<div class="cell" style="left:549px;top:172px">Item</div>
<div class="cell" style="left:669px;top:172px">Location</div>
<div class="cell" style="left:749px;top:172px">Value</div>
<div class="cell" style="left:549px;top:194px">200000002</div>
<div class="cell" style="left:669px;top:194px">0.261</div>
<div class="cell" style="left:549px;top:216px">200000008</div>
<div class="cell" style="left:669px;top:216px">0.500</div>
<div class="cell" style="left:549px;top:238px">200000008</div>
<div class="cell" style="left:669px;top:238px">3.698</div>
<div class="cell" style="left:549px;top:260px">200000008</div>
<div class="cell" style="left:669px;top:260px">4.320</div>
<div class="cell" style="left:549px;top:282px">200000008</div>
<div class="cell" style="left:669px;top:282px">15.396</div>
<div class="cell" style="left:549px;top:304px">200000008</div>
<div class="cell" style="left:669px;top:304px">15.757</div>
<div class="cell" style="left:549px;top:326px">200000008</div>
<div class="cell" style="left:669px;top:326px">16.417</div>
<div class="cell" style="left:549px;top:348px">200000010</div>
<div class="cell" style="left:669px;top:348px">21.200</div>
<div class="cell" style="left:549px;top:370px">200000010</div>
<div class="cell" style="left:669px;top:370px">18.000</div>
<div class="cell" style="left:549px;top:392px">200000012</div>
<div class="cell" style="left:669px;top:392px">27.068</div>
<div class="cell" style="left:549px;top:414px">200000012</div>
<div class="cell" style="left:669px;top:414px">41.089</div>
<div class="cell" style="left:549px;top:436px">200000169</div>
<div class="cell" style="left:669px;top:436px">200.120</div>
<div class="cell" style="left:549px;top:458px">200000169</div>
<div class="cell" style="left:669px;top:458px">212.000</div>
<div class="cell" style="left:549px;top:480px">200000212</div>
<div class="cell" style="left:669px;top:480px">0.756</div>
<div class="cell" style="left:549px;top:502px">200000212</div>
<div class="cell" style="left:669px;top:502px">12.545</div>
<div class="cell" style="left:549px;top:524px">200000212</div>
<div class="cell" style="left:669px;top:524px">12.312</div>
<div class="cell" style="left:549px;top:546px">200000212</div>
<div class="cell" style="left:669px;top:546px">21.400</div>
<div style="left:1064px;top:344px;width:83px;height:25px;border:3px solid #000"></div>
<div style="left:1141px;top:363px;width:7px;height:7px;background:#fff"></div>
<div style="left:1143px;top:365px;width:5px;height:5px;background:#000"></div>
<div style="left:843px;top:184px;width:145px;height:138px;background:#000"></div>
<div style="left:840px;top:181px;width:145px;height:139px;background:#ffffe1;border:1px solid #000"></div>
<div style="left:843px;top:182px;font-weight:bold;font-size:13.6px;line-height:17px;color:#000;white-space:nowrap">I want this column<br>filled with correct<br>values. Value of an<br>Item at a Location is<br>specified by the<br>Range (From/To)</div>
<svg style="left:812px;top:174px" width="30" height="30"><path d="M28 8H26L17 16" stroke="#000" stroke-width="1.2" fill="none"/><path d="M14 19.5L15.5 13L20.5 18.5Z" fill="#000"/><path d="M7 18H13V24.5Z" fill="#f00"/></svg>
<div style="left:1418px;top:147px;width:22px;height:673px;background:#f8f7f2"></div>
<div style="left:1418px;top:147px;width:22px;height:6px;background:#ece9d8;border-top:1px solid #9d9a88"></div>
<div style="left:1418px;top:153px;width:22px;height:1px;background:#000"></div>
<div class="sbtn" style="left:1420px;top:155px;width:18px;height:19px"></div>
<svg style="left:1420px;top:155px" width="18" height="19"><path d="M5 11L9 7L13 11" fill="none" stroke="#4d6185" stroke-width="2"/></svg>
<div class="sbtn" style="left:1420px;top:176px;width:18px;height:16px"></div>
<svg style="left:1420px;top:176px" width="18" height="16" shape-rendering="crispEdges"><path d="M5 4.5H12M5 6.5H12M5 8.5H12M5 10.5H12" stroke="#fff"/><path d="M6 5.5H13M6 7.5H13M6 9.5H13M6 11.5H13" stroke="#8aa2e8"/></svg>
<div class="sbtn" style="left:1420px;top:801px;width:18px;height:18px"></div>
<svg style="left:1420px;top:801px" width="18" height="18"><path d="M5 7L9 11L13 7" fill="none" stroke="#4d6185" stroke-width="2"/></svg>
<div style="left:0;top:820px;width:1440px;height:20px;background:#ece9d8;border-top:1px solid #aeaa98"></div>
<div style="left:1px;top:820px;width:1px;height:20px;background:#9d9a88"></div>
<div style="left:81px;top:821px;width:1px;height:19px;background:#9d9a88"></div>
<svg style="left:2px;top:821px" width="80" height="19"><path d="M7 5V14" stroke="#000" stroke-width="1.2"/><path d="M8 9.5L13 5V14Z" fill="#000"/><path d="M29 9.5L34 5V14Z" fill="#000"/><path d="M49 5L54 9.5L49 14Z" fill="#000"/><path d="M69 5L74 9.5L69 14Z" fill="#000"/><path d="M75 5V14" stroke="#000" stroke-width="1.2"/></svg>
<svg style="left:80px;top:820px" width="220" height="20"><path d="M82 0L70 19H137L149 0" fill="#ece9d8" stroke="#000" stroke-width="1"/><path d="M146 0L134 19H200L212 0" fill="#ece9d8" stroke="#000" stroke-width="1"/><path d="M2 0L12 19H70L80 0Z" fill="#fff" stroke="#000" stroke-width="1"/><path d="M2 0H80" stroke="#fff" stroke-width="2"/></svg>
<div style="left:94px;top:821px;font-weight:bold;font-size:15.2px;white-space:nowrap">Sheet1</div>
<div style="left:165px;top:822px;font-size:14px;white-space:nowrap">Sheet2</div>
<div style="left:232px;top:822px;font-size:14px;white-space:nowrap">Sheet3</div>
<div style="left:856px;top:821px;width:562px;height:19px;background:#f8f7f2"></div>
<div style="left:856px;top:821px;width:2px;height:19px;background:#000;border-right:1px solid #fff"></div>
<div class="sbtn" style="left:859px;top:822px;width:19px;height:17px"></div>
<svg style="left:859px;top:822px" width="19" height="17"><path d="M11 4L7 8.5L11 13" fill="none" stroke="#4d6185" stroke-width="2"/></svg>
<div class="sbtn" style="left:880px;top:822px;width:448px;height:17px"></div>
<svg style="left:1098px;top:825px" width="12" height="11" shape-rendering="crispEdges"><path d="M2.5 2V9M4.5 2V9M6.5 2V9M8.5 2V9" stroke="#fff"/><path d="M3.5 3V10M5.5 3V10M7.5 3V10M9.5 3V10" stroke="#8aa2e8"/></svg>
<div class="sbtn" style="left:1393px;top:822px;width:18px;height:17px"></div>
<svg style="left:1393px;top:822px" width="18" height="17"><path d="M7 4L11 8.5L7 13" fill="none" stroke="#4d6185" stroke-width="2"/></svg>
<div style="left:1417px;top:820px;width:2px;height:20px;background:#000"></div>
<div style="left:1419px;top:820px;width:21px;height:20px;background:#ece9d8"></div>
<div style="left:0;top:840px;width:1440px;height:1px;background:#fff"></div>
<div style="left:0;top:841px;width:1440px;height:25px;background:#ece9d8"></div>
<div style="left:7px;top:850px;font-size:12.6px">Ready</div>
<div style="left:1078px;top:845px;width:34px;height:20px;border:1px solid #cdcac0"></div>
<div style="left:1113px;top:845px;width:131px;height:20px;border:1px solid #cdcac0"></div>
<div style="left:1245px;top:845px;width:29px;height:20px;border:1px solid #cdcac0"></div>
<div style="left:1275px;top:845px;width:37px;height:20px;border:1px solid #cdcac0"></div>
<div style="left:1313px;top:845px;width:31px;height:20px;border:1px solid #cdcac0"></div>
<div style="left:1345px;top:845px;width:36px;height:20px;border:1px solid #cdcac0"></div>
<div style="left:1382px;top:845px;width:28px;height:20px;border:1px solid #cdcac0"></div>
<div style="left:1410px;top:845px;width:25px;height:20px;border:1px solid #cdcac0"></div>
<div style="left:0;top:866px;width:1440px;height:34px;background:linear-gradient(#3366ff 0px,#3a70f8 2px,#60a0ff 3px,#2458e8 4px,#1e4ee0 30px,#1a44d0 33px,#10309a 34px)"></div>
<div style="left:0;top:866px;width:113px;height:34px;background:linear-gradient(#6cbc6c,#48a248 12%,#399639 50%,#2f872f 85%,#246e24);border-radius:0 13px 13px 0;box-shadow:inset -2px 0 2px #1e5e1e"></div>
<svg style="left:9px;top:870px" width="28" height="28"><g stroke="#1a3a1a" stroke-width="0.6" stroke-opacity="0.5"><path d="M4 4Q9 1 14 4L13 12Q8 9 3 12Z" fill="#f05020"/><path d="M15 5Q20 8 26 5L25 13Q20 16 14 13Z" fill="#70c030"/><path d="M3 13Q8 10 13 13L12 21Q7 18 2 21Z" fill="#4070f0"/><path d="M14 14Q19 17 25 14L24 22Q19 25 13 22Z" fill="#f8c010"/></g></svg>
<div style="left:41px;top:872px;color:#fff;font-weight:bold;font-style:italic;font-size:22px;text-shadow:1px 1px 1px #1a4a1a">start</div>
<div class="task" style="left:123px;width:158px;"><div class="lbl" style="left:33px">tutorials</div><svg style="left:9px;top:4px" width="20" height="20"><path d="M1 4H7L9 6H17V17H1Z" fill="#e8c060" stroke="#907030"/><path d="M3 8H19L16 17H1Z" fill="#f4d070"/><circle cx="11" cy="12" r="3.5" fill="#d8e8f8" stroke="#7090a8"/></svg></div>
<div class="task" style="left:282px;width:160px;background:linear-gradient(#1e4cc0,#1b48b8 50%,#1e50c4);box-shadow:inset 1px 1px 1px #143a94"><div class="lbl" style="left:36px"><span style="color:#f8c070">3</span> Microsoft Of...</div><svg style="left:10px;top:4px" width="21" height="21"><rect x="1" y="1" width="18" height="18" fill="#fff" stroke="#6a9a58" stroke-width="2"/><path d="M5.5 6L10 10L5.5 14M15.5 6L11 10L15.5 14" fill="none" stroke="#1a8a2a" stroke-width="3"/><path d="M5 5.5H16M5 14.5H16" stroke="#0a4a0a" stroke-width="1.6"/></svg><div style="left:148px;top:11px;border-left:5px solid transparent;border-right:5px solid transparent;border-top:6px solid #fff"></div></div>
<div class="task" style="left:443px;width:157px;"><div class="lbl" style="left:33px">Sajha.com - - K...</div><svg style="left:8px;top:4px" width="20" height="20"><path d="M6 1H15L19 5V19H6Z" fill="#fff" stroke="#909090"/><circle cx="8" cy="11" r="6" fill="none" stroke="#2a6ad8" stroke-width="2.4"/><path d="M3 11H13" stroke="#2a6ad8" stroke-width="2"/><path d="M1 14Q8 2 16 4" fill="none" stroke="#f0b020" stroke-width="1.2"/></svg></div>
<div class="task" style="left:603px;width:158px;"><div class="lbl" style="left:33px">Untitled - Notepad</div><svg style="left:8px;top:3px" width="20" height="22"><path d="M4 3L14 1L17 18L7 20Z" fill="#a8d8f0" stroke="#5a8ab0"/><path d="M6 5L14 3.5M6.5 8L14.5 6.5M7 11L15 9.5" stroke="#fff"/></svg></div>
<div style="left:1260px;top:866px;width:180px;height:34px;background:linear-gradient(#2aa8f8 0px,#129cf0 3px,#0c8ee8 28px,#0a7ad8 34px);box-shadow:inset 1px 0 0 #1060c0,inset 2px 0 0 #5ac0ff"></div>
<div style="left:1370px;top:875px;color:#fff;font-size:14.2px;letter-spacing:-0.2px;white-space:nowrap">4:17 PM</div>
<svg style="left:1150px;top:866px" width="110" height="34"><path d="M8 20L16 12" stroke="#000" stroke-width="4.5" stroke-linecap="round"/><path d="M8.5 19.5L15.5 12.5" stroke="#e8e8e8" stroke-width="2.4" stroke-linecap="round"/><circle cx="19" cy="12" r="4.5" fill="#000"/><circle cx="19" cy="12" r="3.2" fill="#d8d8d8"/><path d="M17 10L21 14M21 10L17 14" stroke="#888" stroke-width="0.8"/><path d="M7 22Q8 28 13 27Q16 26 18 25" fill="none" stroke="#000" stroke-width="1.5"/><rect x="31" y="9" width="18" height="14" fill="#fff" stroke="#000" stroke-width="2"/><rect x="32" y="10" width="16" height="3" fill="#1a2ad8"/><path d="M34 16H38M34 19H38" stroke="#555" stroke-width="1.2"/><path d="M47 14L38 24" stroke="#000" stroke-width="3"/><path d="M46.5 14.5L38.5 23.5" stroke="#ddd" stroke-width="1.3"/><rect x="42" y="12" width="5" height="6" fill="#fff" stroke="#000"/><path d="M37 25Q34 29 38 28Q41 27 43 26" fill="none" stroke="#000" stroke-width="1.5"/><path d="M58 25L72 11" stroke="#000" stroke-width="3"/><path d="M64 19L72 11" stroke="#eee" stroke-width="1.4"/><path d="M60 21L65 16L66 20Z" fill="#f0e020" stroke="#000" stroke-width="0.6"/><path d="M60 24H71V27H62Z" fill="#e8e8e8" stroke="#000" stroke-width="0.8"/><rect x="70" y="21" width="5" height="5" fill="#1a2ad8" stroke="#000" stroke-width="0.8"/><rect x="71" y="22" width="3" height="1.5" fill="#3cf"/><rect x="77.5" y="6.5" width="20" height="24" fill="#1c46c0" stroke="#2a58d8"/><path d="M80 17L86 10L92 17Z" fill="#e0e0e0" stroke="#000" stroke-width="1"/><circle cx="85" cy="24" r="4.5" fill="#f4f4f4" stroke="#000" stroke-width="1"/><path d="M96 10L90 25" stroke="#000" stroke-width="2.2"/><circle cx="96" cy="10" r="1.6" fill="#888"/></svg>
<svg style="left:1248px;top:870px" width="26" height="28"><defs><radialGradient id="cg" cx="40%" cy="35%" r="70%"><stop offset="0" stop-color="#a8e0ff"/><stop offset="0.6" stop-color="#3a9af0"/><stop offset="1" stop-color="#1a6ad8"/></radialGradient></defs><circle cx="13" cy="13.5" r="9" fill="url(#cg)" stroke="#c8d8f0" stroke-width="1"/><path d="M15 9L10.5 13.5L15 18" fill="none" stroke="#fff" stroke-width="2.6"/></svg>
<svg style="left:1260px;top:866px" width="110" height="34"><rect x="12.5" y="8.5" width="11" height="9" fill="#2a3a8a" stroke="#c8c8d8"/><rect x="13" y="18" width="10" height="4" fill="#f0f0f0" stroke="#606080" stroke-width="0.6"/><path d="M25 9Q27 13 25 17M28 7Q31 13 28 19" fill="none" stroke="#d8d8d8" stroke-width="1.6"/><g stroke="#000" stroke-width="1"><rect x="33.5" y="20.5" width="3" height="5" fill="#10e010"/><rect x="38.5" y="15.5" width="3" height="10" fill="#10e010"/><rect x="43.5" y="11.5" width="3" height="14" fill="#10e010"/><rect x="48.5" y="6.5" width="4" height="19" fill="#1a9af0"/></g><circle cx="63" cy="14" r="7" fill="#909090" stroke="#404040"/><circle cx="62" cy="13" r="3" fill="#c8c8c8"/><circle cx="68" cy="20" r="4.5" fill="#e02810" stroke="#fff" stroke-width="1.2"/><path d="M66 20H70" stroke="#fff" stroke-width="1.4"/><path d="M79 7L82 10V21L88 23" fill="none" stroke="#000" stroke-width="2.2"/><path d="M79.5 7.5L81 9.5V20.5" fill="none" stroke="#fff" stroke-width="1"/><path d="M84 21L92 24L90 27L83 24Z" fill="#d8d8d8" stroke="#000" stroke-width="1"/><path d="M90 23L96 20M91 26L97 24" stroke="#f0d010" stroke-width="2"/></svg>
</body></html>
